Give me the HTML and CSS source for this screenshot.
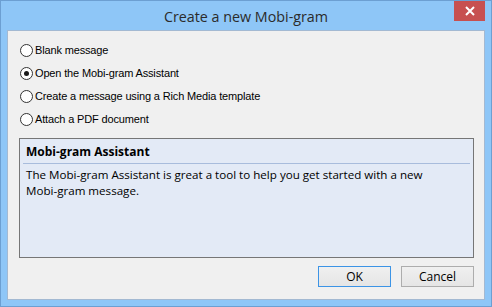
FILE: index.html
```html
<!DOCTYPE html>
<html lang="en">
<head>
  <meta charset="UTF-8">
  <link rel="stylesheet" href="styles.css">
</head>
<body>
  <div class="window">
    <div class="titlebar">
      <span class="title">Create a new Mobi-gram</span>
      <button class="close-button">
        <svg width="10" height="10" viewBox="0 0 10 10"><path d="M1 1 L9 9 M9 1 L1 9" stroke="#fff" stroke-width="2"/></svg>
      </button>
    </div>
    <div class="client">
      <div class="options">
        <label class="option"><span class="radio"></span>Blank message</label>
        <label class="option"><span class="radio checked"></span>Open the Mobi-gram Assistant</label>
        <label class="option"><span class="radio"></span>Create a message using a Rich Media template</label>
        <label class="option"><span class="radio"></span>Attach a PDF document</label>
      </div>
      <div class="info-box">
        <div class="info-title">Mobi-gram Assistant</div>
        <div class="info-text">The Mobi-gram Assistant is great a tool to help you get started with a new <span class="nowrap">Mobi-gram message.</span></div>
      </div>
      <div class="button-row">
        <button class="dialog-button default-button">OK</button>
        <button class="dialog-button">Cancel</button>
      </div>
    </div>
  </div>
</body>
</html>
```

FILE: styles.css
```css
body {
  margin: 0;
  width: 492px;
  height: 307px;
  overflow: hidden;
}

.window {
  width: 492px;
  height: 307px;
  box-sizing: border-box;
  border: 1px solid #6c9fd2;
  background-color: #8ec6f7;
  display: flex;
  flex-direction: column;
}

.titlebar {
  position: relative;
  height: 29px;
  display: flex;
  align-items: center;
  justify-content: center;
}

.title {
  font-family: "Open Sans", sans-serif;
  font-size: 14.3px;
  color: #2b2b2b;
  padding-top: 1px;
}

.close-button {
  position: absolute;
  top: 0;
  right: 6px;
  width: 31px;
  height: 20px;
  border: none;
  padding: 0;
  background-color: #c75050;
  display: flex;
  align-items: center;
  justify-content: center;
}

.client {
  flex: 1;
  margin: 0 6px 6px 6px;
  border: 1px solid #a3b9d2;
  background-color: #f0f0f0;
  padding: 8px 10px 0 11px;
  display: flex;
  flex-direction: column;
}

.options {
  display: flex;
  flex-direction: column;
  padding-left: 1px;
}

.option {
  height: 23px;
  display: flex;
  align-items: center;
  font-family: "Liberation Sans", sans-serif;
  font-size: 11px;
  letter-spacing: -0.15px;
  color: #000;
  padding-bottom: 1px;
  box-sizing: border-box;
}

.radio {
  width: 11px;
  height: 11px;
  border: 1px solid #333;
  border-radius: 50%;
  background-color: #fff;
  margin-right: 2px;
  position: relative;
  flex-shrink: 0;
}

.radio.checked::after {
  content: '';
  position: absolute;
  top: 3px;
  left: 3px;
  width: 5px;
  height: 5px;
  border-radius: 50%;
  background-color: #1a1a1a;
}

.info-box {
  margin-top: 7px;
  height: 120px;
  box-sizing: border-box;
  border: 1px solid #767676;
  background-color: #e3eaf6;
  padding: 0 3px;
  font-family: "Open Sans", sans-serif;
  font-size: 11.6px;
  color: #000;
}

.info-title {
  font-weight: bold;
  font-size: 12px;
  padding: 4px 3px 3px 3px;
  border-bottom: 1px solid #a8bcdc;
}

.info-text {
  padding: 3px 3px;
  line-height: 16px;
}

.nowrap {
  white-space: nowrap;
}

.button-row {
  display: flex;
  justify-content: flex-end;
  gap: 10px;
  margin-top: 8px;
}

.dialog-button {
  width: 73px;
  height: 21px;
  box-sizing: border-box;
  border: 1px solid #adadad;
  background: linear-gradient(#f0f0f0, #e5e5e5);
  font-family: "Open Sans", sans-serif;
  font-size: 12px;
  color: #000;
  padding: 0;
}

.default-button {
  border-color: #3c94e6;
}
```
